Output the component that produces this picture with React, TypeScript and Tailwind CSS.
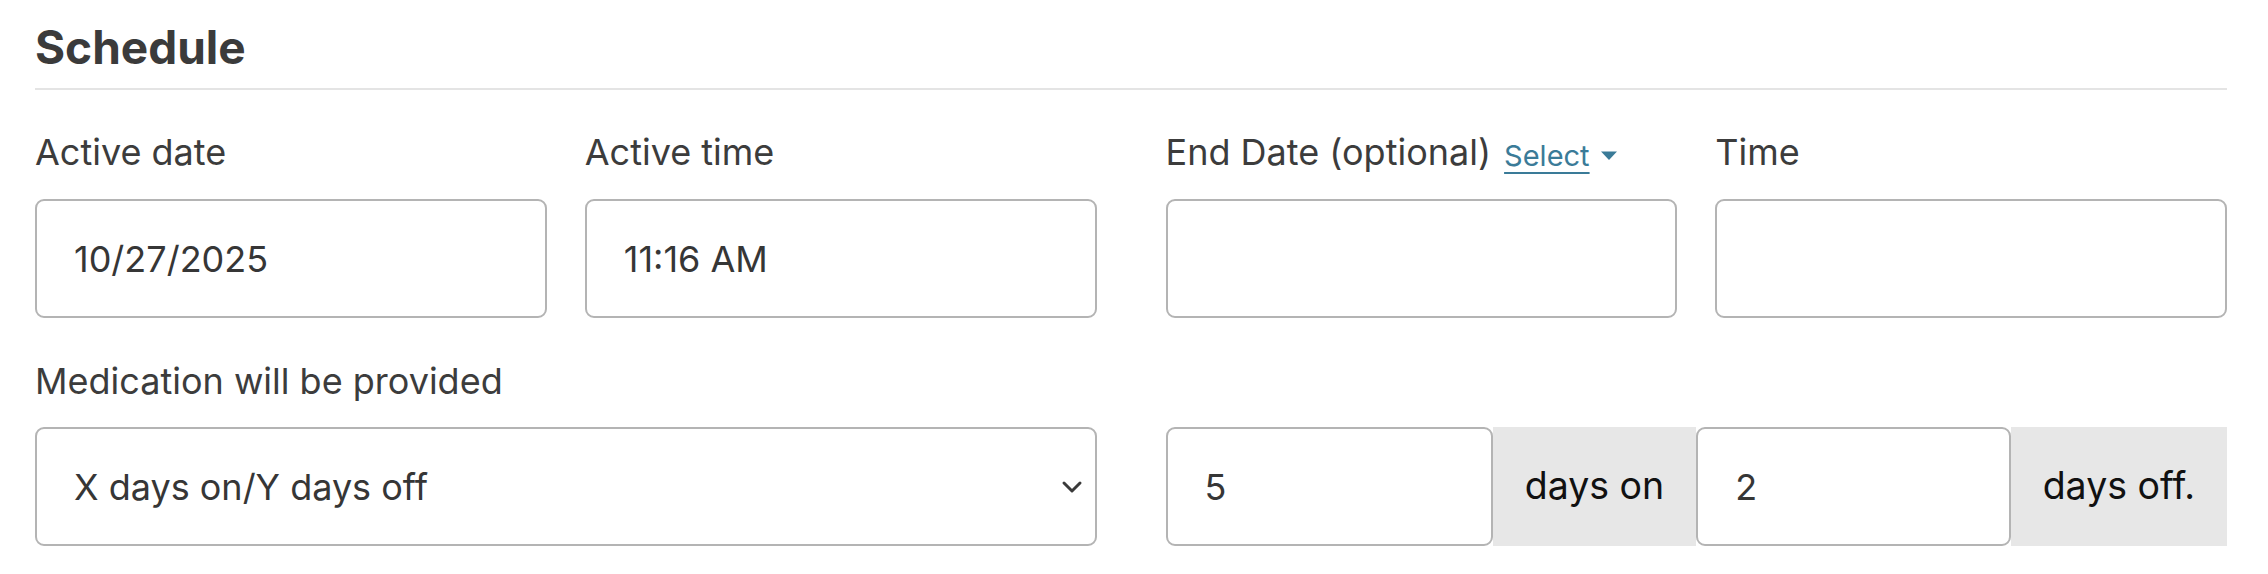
import React from 'react';

const font = { fontFamily: 'Inter, "Noto Sans", sans-serif' };

const Label = ({ children }: { children: React.ReactNode }) => (
    <div className="h-[36px] text-[36px] leading-none text-[#3c3c3c] whitespace-nowrap flex items-center">
        {children}
    </div>
);

const Field = ({ value, className = '' }: { value?: string; className?: string }) => (
    <div
        className={`h-[119px] border-2 border-[#b4b4b4] rounded-[9px] bg-white flex items-center pl-[37px] text-[36px] text-[#363636] ${className}`}
    >
        {value}
    </div>
);

const Addon = ({ text }: { text: string }) => (
    <div className="h-[119px] bg-[#e7e7e7] flex items-center px-[32px] text-[37.5px] text-[#111] whitespace-nowrap">
        {text}
    </div>
);

export default function App() {
    return (
        <div className="bg-white w-[2268px] h-[574px] pl-[35px] pt-[24px]" style={font}>
            <div className="w-[2192px]">
                <h2 className="text-[46px] leading-none font-bold text-[#3b3b3b] h-[46px]">Schedule</h2>
                <div className="mt-[18px] h-[2px] bg-[#e4e4e4]" />

                <div className="mt-[44px] grid grid-cols-2 gap-x-[69px]">
                    <div className="grid grid-cols-2 gap-x-[38px]">
                        <div>
                            <Label>Active date</Label>
                            <Field value="10/27/2025" className="mt-[29px]" />
                        </div>
                        <div>
                            <Label>Active time</Label>
                            <Field value="11:16 AM" className="mt-[29px]" />
                        </div>
                    </div>
                    <div className="grid grid-cols-2 gap-x-[38px]">
                        <div>
                            <Label>
                                End Date (optional)
                                <span className="ml-[13px] text-[29px] text-[#3a7b98] underline decoration-2 underline-offset-[6px] mt-[6px]">
                                    Select
                                </span>
                                <svg width="18" height="11" viewBox="0 0 18 11" className="ml-[10px] mt-[6px]">
                                    <path d="M1 1.5h16L9 10z" fill="#3a7b98" />
                                </svg>
                            </Label>
                            <Field className="mt-[29px]" />
                        </div>
                        <div>
                            <Label>Time</Label>
                            <Field className="mt-[29px]" />
                        </div>
                    </div>
                </div>

                <div className="mt-[45px] grid grid-cols-2 gap-x-[69px]">
                    <div>
                        <Label>Medication will be provided</Label>
                        <div className="mt-[28px] h-[119px] border-2 border-[#b4b4b4] rounded-[9px] bg-white flex items-center justify-between pl-[37px] pr-[12px] text-[36px] text-[#363636]">
                            <span>X days on/Y days off</span>
                            <svg width="22" height="14" viewBox="0 0 22 14">
                                <path d="M3 3l8 8 8-8" fill="none" stroke="#3a3a3a" strokeWidth="3" strokeLinecap="round" strokeLinejoin="round" />
                            </svg>
                        </div>
                    </div>
                    <div className="pt-[64px] flex">
                        <div className="flex-1 flex">
                            <Field value="5" className="flex-1" />
                            <Addon text="days on" />
                        </div>
                        <div className="flex-1 flex">
                            <Field value="2" className="flex-1" />
                            <Addon text="days off." />
                        </div>
                    </div>
                </div>
            </div>
        </div>
    );
}
